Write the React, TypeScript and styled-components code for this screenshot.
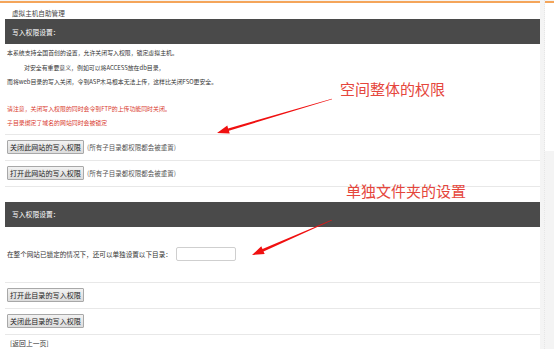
import React from "react";
import styled, { createGlobalStyle } from "styled-components";

const Global = createGlobalStyle`
  html, body { margin: 0; padding: 0; background: #ffffff; }
  body { font-family: "Noto Sans CJK SC", "Noto Sans", sans-serif; }
`;

const Page = styled.div`
  position: relative;
  display: flex;
  width: 554px;
  height: 349px;
  overflow: hidden;
  background: #f4f4f4;
`;

const Main = styled.div`
  width: 540px;
  background: #ffffff;
  margin-top: 1px;
  border-top: 2px solid #f4a55a;
`;

const Gutter = styled.div`
  width: 5px;
  border-right: 1px dotted #e6e6e6;
  box-sizing: border-box;
`;

const SideBox = styled.div`
  width: 9px;
  height: 148px;
  margin-top: 1px;
  background: #ffffff;
  border-top: 2px solid #f4a55a;
`;

const Title = styled.div`
  height: 16px;
  padding-left: 12px;
  display: flex;
  align-items: flex-end;
  font-size: 6.6px;
  line-height: 12px;
  color: #444;
`;

const Panel = styled.div<{ $gap?: number }>`
  margin-left: 5px;
  margin-top: ${(p) => p.$gap ?? 0}px;
`;

const Bar = styled.div`
  height: 25px;
  background: #4a4a4a;
  color: #ffffff;
  font-size: 6.8px;
  display: flex;
  align-items: center;
  padding-left: 7px;
`;

const Intro = styled.div`
  padding: 2px 0 3px 2px;
  border-bottom: 1px solid #e8e8e8;
  font-size: 5.9px;
  line-height: 14.5px;
  color: #333;
`;

const Line = styled.div<{ $indent?: number; $red?: boolean; $gap?: number }>`
  padding-left: ${(p) => p.$indent ?? 0}px;
  color: ${(p) => (p.$red ? "#d93a2e" : "#333")};
  margin-top: ${(p) => p.$gap ?? 0}px;
  white-space: nowrap;
`;

const Row = styled.div<{ $h?: number }>`
  height: ${(p) => p.$h ?? 25}px;
  border-bottom: 1px solid #e8e8e8;
  display: flex;
  align-items: center;
  padding-left: 2px;
  gap: 3px;
  font-size: 6.6px;
  color: #333;
  white-space: nowrap;
`;

const Button = styled.button`
  height: 14px;
  padding: 0 2px;
  margin: 0;
  border: 1px solid #a8a8a8;
  border-radius: 1px;
  background: linear-gradient(#f2f2f2, #dcdcdc);
  font-family: "Noto Sans CJK SC", "Noto Sans", sans-serif;
  font-size: 7.1px;
  line-height: 12px;
  color: #222;
`;

const Note = styled.span`
  font-size: 6.5px;
  color: #555;
`;

const Input = styled.input`
  width: 60px;
  height: 14px;
  box-sizing: border-box;
  border: 1px solid #cfcfcf;
  border-radius: 2px;
  margin: 0 0 0 1px;
  padding: 0;
`;

const Back = styled.div`
  padding: 3px 0 0 5px;
  font-size: 6.8px;
  line-height: 10px;
  color: #333;
`;

const Label = styled.div<{ $x: number; $y: number }>`
  position: absolute;
  left: ${(p) => p.$x}px;
  top: ${(p) => p.$y}px;
  font-size: 15px;
  line-height: 18px;
  color: #e5463c;
  white-space: nowrap;
`;

const Overlay = styled.svg`
  position: absolute;
  left: 0;
  top: 0;
  pointer-events: none;
`;

type Pt = [number, number];

function arrowPoints(tail: Pt, tip: Pt): string {
  const dx = tip[0] - tail[0];
  const dy = tip[1] - tail[1];
  const len = Math.hypot(dx, dy);
  const ux = dx / len;
  const uy = dy / len;
  const nx = -uy;
  const ny = ux;
  const headLen = 12;
  const headW = 4.2;
  const bx = tip[0] - ux * headLen;
  const by = tip[1] - uy * headLen;
  const shaft = 1.3;
  const t = 0.2;
  const pts: Pt[] = [
    [tail[0] + nx * t, tail[1] + ny * t],
    [bx + nx * shaft, by + ny * shaft],
    [bx + nx * headW, by + ny * headW],
    tip,
    [bx - nx * headW, by - ny * headW],
    [bx - nx * shaft, by - ny * shaft],
    [tail[0] - nx * t, tail[1] - ny * t],
  ];
  return pts.map((p) => `${p[0].toFixed(1)},${p[1].toFixed(1)}`).join(" ");
}

export default function App() {
  return (
    <>
      <Global />
      <Page>
        <Main>
          <Title>虚拟主机自助管理</Title>
          <Panel>
            <Bar>写入权限设置：</Bar>
            <Intro>
              <Line>本系统支持全国首创的设置，允许关闭写入权限，锁定虚拟主机。</Line>
              <Line $indent={17}>对安全有重要意义，例如可以将ACCESS放在db目录，</Line>
              <Line>而将web目录的写入关闭，令到ASP木马根本无法上传，这样比关闭FSO更安全。</Line>
              <Line $red $gap={12}>请注意，关闭写入权限的同时会令到FTP的上传功能同时关闭。</Line>
              <Line $red>子目录绑定了域名的网站同时会被锁定</Line>
            </Intro>
            <Row>
              <Button>关闭此网站的写入权限</Button>
              <Note>(所有子目录都权限都会被重置)</Note>
            </Row>
            <Row>
              <Button>打开此网站的写入权限</Button>
              <Note>(所有子目录都权限都会被重置)</Note>
            </Row>
          </Panel>
          <Panel $gap={15}>
            <Bar>写入权限设置：</Bar>
            <Row $h={55}>
              在整个网站已锁定的情况下，还可以单独设置以下目录：
              <Input type="text" />
            </Row>
            <Row>
              <Button>打开此目录的写入权限</Button>
            </Row>
            <Row>
              <Button>关闭此目录的写入权限</Button>
            </Row>
            <Back>[返回上一页]</Back>
          </Panel>
        </Main>
        <Gutter />
        <SideBox />
        <Label $x={340} $y={80}>空间整体的权限</Label>
        <Label $x={346} $y={182}>单独文件夹的设置</Label>
        <Overlay width={554} height={349} viewBox="0 0 554 349">
          <polygon points={arrowPoints([332, 99], [217, 133])} fill="#f01010" />
          <polygon points={arrowPoints([332, 220], [252, 255])} fill="#f01010" />
        </Overlay>
      </Page>
    </>
  );
}
